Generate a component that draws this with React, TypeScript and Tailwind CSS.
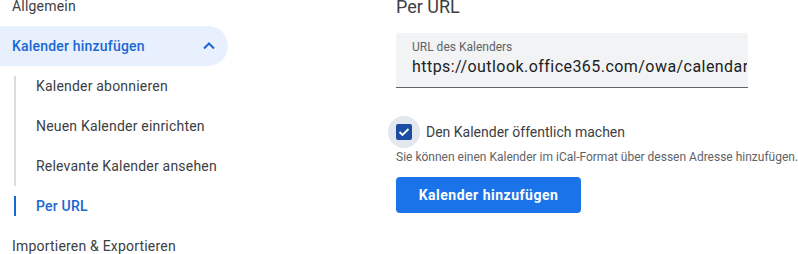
import React from "react";

const font = { fontFamily: "Roboto, 'Liberation Sans', Arial, sans-serif" };

function Chevron() {
  return (
    <svg width="12" height="8" viewBox="0 0 12 8" fill="none">
      <polyline points="1,6.5 6,1.5 11,6.5" stroke="#1967d2" strokeWidth="2" fill="none" />
    </svg>
  );
}

export default function App() {
  return (
    <div className="w-[798px] h-[254px] bg-white overflow-hidden flex items-start" style={font}>
      {/* Left nav */}
      <div className="w-[228px] shrink-0 flex flex-col -mt-[14px] text-[14px] text-[#3c4043] tracking-[0.2px]">
        <div className="h-[40px] shrink-0 flex items-center pl-3">Allgemein</div>
        <div className="h-[40px] shrink-0 flex items-center justify-between pl-3 pr-[13px] bg-[#e8f0fe] rounded-r-full text-[#1967d2] font-medium">
          <span>Kalender hinzufügen</span>
          <Chevron />
        </div>
        <div className="flex shrink-0">
          <div className="ml-[14px] w-[2px] flex flex-col">
            <div className="mt-[10px] h-[110px] bg-[#dadce0]" />
            <div className="mt-[10px] h-[20px] bg-[#1967d2]" />
          </div>
          <div className="flex flex-col pl-[20px]">
            <div className="h-[40px] shrink-0 flex items-center">Kalender abonnieren</div>
            <div className="h-[40px] shrink-0 flex items-center">Neuen Kalender einrichten</div>
            <div className="h-[40px] shrink-0 flex items-center">Relevante Kalender ansehen</div>
            <div className="h-[40px] shrink-0 flex items-center text-[#1967d2] font-medium">Per URL</div>
          </div>
        </div>
        <div className="h-[40px] shrink-0 flex items-center pl-3">Importieren &amp; Exportieren</div>
      </div>

      {/* Right content */}
      <div className="pl-[168px] flex flex-col">
        <div className="-mt-[2px] h-[18px] leading-[18px] text-[18px] text-[#3c4043]">Per URL</div>
        <div className="mt-[17px] w-[352px] h-[55px] bg-[#f1f3f4] rounded-t-[4px] border-b border-[#5f6368] pl-4 pr-[1px] pt-[6px] flex flex-col overflow-hidden">
          <div className="text-[12px] leading-[16px] text-[#5f6368]">URL des Kalenders</div>
          <div className="text-[16px] leading-[24px] text-[#202124] whitespace-nowrap overflow-hidden tracking-[0.45px]">
            https://outlook.office365.com/owa/calendar/abc123/calendar.ics
          </div>
        </div>
        <div className="mt-[28px] h-[32px] flex items-center">
          <div className="-ml-[8px] w-[32px] h-[32px] rounded-full bg-[#e3e7ef] flex items-center justify-center">
            <div className="w-[16px] h-[16px] rounded-[2px] bg-[#1b4ea3] flex items-center justify-center">
              <svg width="12" height="10" viewBox="0 0 12 10" fill="none">
                <polyline points="1.5,5 4.5,8 10.5,2" stroke="white" strokeWidth="1.8" fill="none" />
              </svg>
            </div>
          </div>
          <span className="ml-[6px] text-[14px] text-[#3c4043]">Den Kalender öffentlich machen</span>
        </div>
        <div className="mt-[1px] text-[12px] leading-[16px] text-[#5f6368] whitespace-nowrap">
          Sie können einen Kalender im iCal-Format über dessen Adresse hinzufügen.
        </div>
        <button className="mt-[12px] w-[185px] h-[36px] rounded-[4px] bg-[#1a73e8] text-white text-[14px] font-bold tracking-[0.5px] flex items-center justify-center">
          Kalender hinzufügen
        </button>
      </div>
    </div>
  );
}
